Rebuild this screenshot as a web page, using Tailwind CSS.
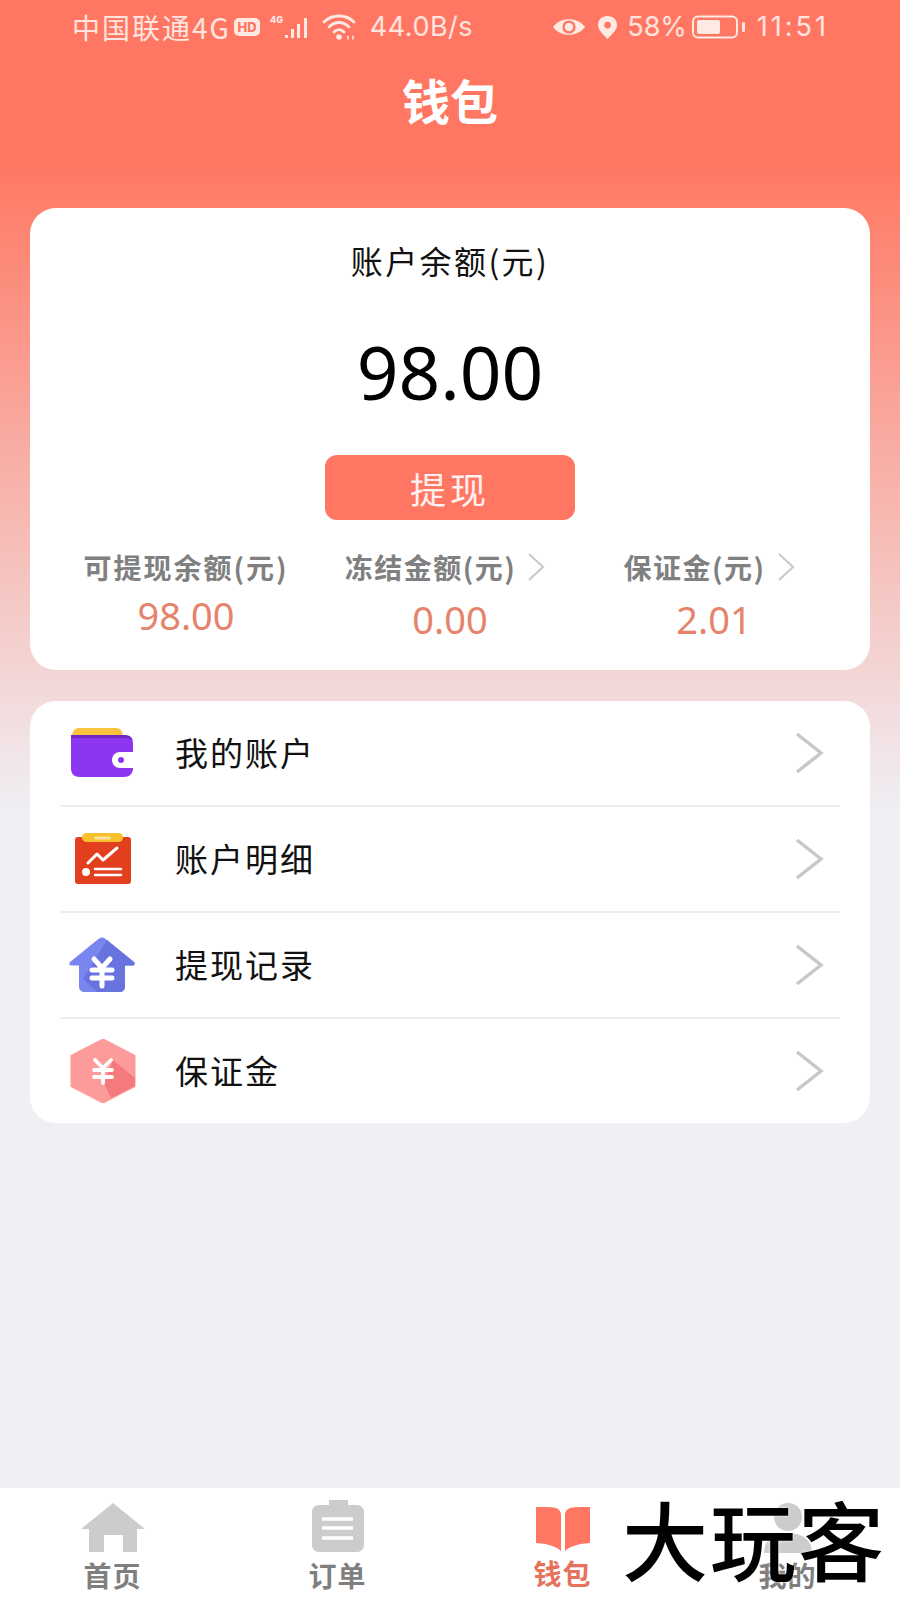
<!DOCTYPE html>
<html lang="zh">
<head>
<meta charset="utf-8">
<script src="https://cdn.jsdelivr.net/npm/@tailwindcss/browser@4"></script>
</head>
<body class="m-0">
<div class="relative w-[900px] h-[1600px] overflow-hidden flex flex-col font-['Noto_Sans_CJK_SC','Noto_Sans',sans-serif] bg-[linear-gradient(180deg,#ff7762_0px,#ff7762_160px,#f0eff4_810px,#f0eff4_1600px)]">

  <!-- status bar -->
  <div class="h-[54px] flex items-center justify-between pl-[72px] pr-[71px] text-white/80 text-[27px] font-['Inter','Noto_Sans_CJK_SC',sans-serif] shrink-0">
    <div class="flex items-center">
      <span class="font-['Noto_Sans_CJK_SC',sans-serif] text-[28px] tracking-[2px] whitespace-nowrap">中国联通4G</span>
      <svg width="28" height="22" viewBox="0 0 28 22" class="ml-[2px]"><rect x="1" y="2" width="26" height="18" rx="5" fill="#ffe9e3"/><text x="14" y="16" text-anchor="middle" font-size="13" font-weight="800" font-family="Inter" fill="#ff7762">HD</text></svg>
      <svg width="46" height="30" viewBox="0 0 46 30" class="ml-[9px]"><text x="0" y="11" font-size="9" font-weight="800" font-family="Inter" fill="#ffe9e3">4G</text><rect x="15" y="23" width="3" height="3" fill="#ffe9e3"/><rect x="21" y="17" width="3" height="9" fill="#ffe9e3"/><rect x="27" y="12" width="3" height="14" fill="#ffe9e3"/><rect x="34" y="6" width="3" height="20" fill="#ffe9e3"/></svg>
      <svg width="36" height="30" viewBox="0 0 36 30" class="ml-[6px]" fill="none" stroke="#ffe9e3" stroke-width="2.800" stroke-linecap="round"><path d="M2 10C10 2 24 2 32 10"/><path d="M7 15C13 9 21 9 27 15"/><path d="M12 20C15 17 19 17 22 20"/><circle cx="17" cy="25" r="2.800" fill="#ffe9e3" stroke="none"/><path d="M26 24v3M31 24v3" stroke-width="1.500"/></svg>
      <span class="ml-[12px] tracking-[0.5px] whitespace-nowrap">44.0B/s</span>
    </div>
    <div class="flex items-center">
      <svg width="34" height="24" viewBox="0 0 36 24"><path d="M1 12C9 1 27 1 35 12C27 23 9 23 1 12Z" fill="#ffe9e3"/><circle cx="18" cy="12" r="7" fill="#ff7762"/><circle cx="18" cy="12" r="4.500" fill="#ffe9e3"/></svg>
      <svg width="21" height="25" viewBox="0 0 22 26" class="ml-[11px]"><path d="M11 1C5 1 1 5 1 10.500C1 16 8 22 11 25C14 22 21 16 21 10.500C21 5 17 1 11 1Z" fill="#ffe9e3"/><circle cx="11" cy="10.500" r="3.500" fill="#ff7762"/></svg>
      <span class="ml-[9px]">58%</span>
      <svg width="54" height="24" viewBox="0 0 54 24" class="ml-[5px]"><rect x="1" y="1.500" width="44" height="21" rx="5" fill="none" stroke="#ffe9e3" stroke-width="2"/><rect x="5" y="5" width="23" height="14" rx="2" fill="#ffe9e3"/><rect x="50" y="7" width="3" height="10" rx="1.500" fill="#ffe9e3"/></svg>
      <span class="ml-[11px] tracking-[3px]">11:51</span>
    </div>
  </div>

  <!-- title -->
  <div class="h-[94px] flex items-center justify-center text-white text-[48px] font-bold leading-none pb-[5px] shrink-0">钱包</div>

  <!-- balance card -->
  <div class="mx-[30px] mt-[60px] h-[462px] bg-white rounded-[26px] flex flex-col items-center shrink-0">
    <div class="mt-[30px] text-[32px] leading-[44px] tracking-[2.4px] text-[#111]">账户余额(元)</div>
    <div class="mt-[45px] text-[73px] leading-[90px] text-black font-['Noto_Sans',sans-serif]">98.00</div>
    <div class="mt-[38px] w-[250px] h-[65px] rounded-[12px] bg-[#ff7762] text-white/90 text-[36px] tracking-[4px] flex items-center justify-center">提现</div>
    <div class="w-full grid grid-cols-3 mt-[29px] px-[24px]">
      <div class="flex flex-col items-center">
        <div class="text-[28px] leading-[36px] tracking-[2px] font-semibold text-[#808080] whitespace-nowrap">可提现余额(元)</div>
        <div class="text-[38px] leading-[46px] mt-[7px] text-[#e5836b] font-['Noto_Sans',sans-serif]">98.00</div>
      </div>
      <div class="flex flex-col items-center">
        <div class="flex items-center pr-[10px] text-[28px] leading-[36px] tracking-[1.5px] font-semibold text-[#808080] whitespace-nowrap">冻结金额(元)
          <svg width="18" height="28" viewBox="0 0 18 28" class="ml-[11px]" fill="none" stroke="#c8c8c8" stroke-width="2"><path d="M2 1L16 14L2 27"/></svg>
        </div>
        <div class="text-[38px] leading-[46px] mt-[11px] text-[#e5836b] font-['Noto_Sans',sans-serif]">0.00</div>
      </div>
      <div class="flex flex-col items-center">
        <div class="flex items-center pr-[10px] text-[28px] leading-[36px] tracking-[1.5px] font-semibold text-[#808080] whitespace-nowrap">保证金(元)
          <svg width="18" height="28" viewBox="0 0 18 28" class="ml-[11px]" fill="none" stroke="#c8c8c8" stroke-width="2"><path d="M2 1L16 14L2 27"/></svg>
        </div>
        <div class="text-[38px] leading-[46px] mt-[11px] text-[#e5836b] font-['Noto_Sans',sans-serif]">2.01</div>
      </div>
    </div>
  </div>

  <!-- menu card -->
  <div class="mx-[30px] mt-[31px] bg-white rounded-[26px] px-[30px] shrink-0 text-[33px] leading-[44px] tracking-[2px] text-[#111]">
    <div class="h-[106px] flex items-center border-b-2 border-[#eeeeee]">
      <svg width="66" height="52" viewBox="0 0 66 52" class="ml-[10px] shrink-0">
        <path d="M2 10C2 4 5 1 9 1H46C50 1 53 4 53 10V14H2Z" fill="#fac23f"/>
        <path d="M1 9H55C60 9 63 12 63 17V41C63 47 59 50 54 50H10C4 50 1 47 1 41Z" fill="#8d36f2"/>
        <path d="M1 8H55C59 8 62 10 63 14C60 11 58 11 55 11H1Z" fill="#6e28c0"/>
        <path d="M50 25H63V41H50C45 41 42 37 42 33C42 29 45 25 50 25Z" fill="#fff"/>
        <circle cx="51" cy="33" r="3" fill="#8d36f2"/>
      </svg>
      <span class="ml-[39px] pb-[2px]">我的账户</span>
      <svg width="30" height="42" viewBox="0 0 30 42" class="ml-auto mr-[15px]" fill="none" stroke="#c8c8c8" stroke-width="3.500"><path d="M2 2L26 21L2 40"/></svg>
    </div>
    <div class="h-[106px] flex items-center border-b-2 border-[#eeeeee]">
      <svg width="66" height="52" viewBox="0 0 66 52" class="ml-[10px] shrink-0">
        <rect x="5" y="4" width="56" height="47" rx="3" fill="#e23f1e"/>
        <rect x="12" y="0" width="41" height="9" rx="4.500" fill="#f9c02e"/>
        <rect x="24" y="3.500" width="17" height="3" rx="1.500" fill="#fbe49a"/>
        <path d="M18 30L27 21L33 27L47 15" fill="none" stroke="#fff" stroke-width="3" stroke-linecap="round" stroke-linejoin="round"/>
        <circle cx="16" cy="39" r="4" fill="#fff"/>
        <path d="M25 36H51M25 42H51" stroke="#fff" stroke-width="2.500" stroke-linecap="round"/>
      </svg>
      <span class="ml-[39px] pb-[2px]">账户明细</span>
      <svg width="30" height="42" viewBox="0 0 30 42" class="ml-auto mr-[15px]" fill="none" stroke="#c8c8c8" stroke-width="3.500"><path d="M2 2L26 21L2 40"/></svg>
    </div>
    <div class="h-[106px] flex items-center border-b-2 border-[#eeeeee]">
      <svg width="66" height="56" viewBox="0 0 66 56" class="ml-[9px] shrink-0">
        <path d="M30 1.500C32 0 34 0 36 1.500L65 25C66.500 27 65.500 28.500 63 28.500H56V49C56 53 54 55 50 55H16C12 55 10 53 10 49V28.500H3C0.500 28.500 -0.500 27 1 25Z" fill="#7a86ef"/>
        <path d="M38 3L65 25C66.500 27 65.500 28.500 63 28.500H56V49C56 53 54 55 50 55H28L14 42Z" fill="#6873e0"/>
        <path d="M25 22L33 31L41 22M23 33H43M23 41H43M33 31V49" fill="none" stroke="#fff" stroke-width="5" stroke-linecap="round"/>
      </svg>
      <span class="ml-[40px] pb-[2px]">提现记录</span>
      <svg width="30" height="42" viewBox="0 0 30 42" class="ml-auto mr-[15px]" fill="none" stroke="#c8c8c8" stroke-width="3.500"><path d="M2 2L26 21L2 40"/></svg>
    </div>
    <div class="h-[104px] flex items-center">
      <svg width="66" height="64" viewBox="0 0 66 64" class="ml-[10px] shrink-0">
        <path d="M33 1L64 17V47L33 63L2 47V17Z" fill="#fd9a9a" stroke="#fd9a9a" stroke-width="3" stroke-linejoin="round"/>
        <path d="M43 21L65 39V47L41 59L34 44Z" fill="#f47a7e"/>
        <path d="M25 21L33 29L41 21M24 31H42M24 38H42M33 29V44" fill="none" stroke="#fff" stroke-width="3.800" stroke-linecap="round"/>
      </svg>
      <span class="ml-[39px] pb-[2px]">保证金</span>
      <svg width="30" height="42" viewBox="0 0 30 42" class="ml-auto mr-[15px]" fill="none" stroke="#c8c8c8" stroke-width="3.500"><path d="M2 2L26 21L2 40"/></svg>
    </div>
  </div>

  <!-- tab bar -->
  <div class="absolute left-0 right-0 bottom-0 h-[113px] bg-white border-t border-[#f0f0f2] grid grid-cols-4 text-[28px] tracking-[1px] font-semibold text-[#7f7f7f]">
    <div class="flex flex-col items-center pt-[15px]">
      <svg width="66" height="50" viewBox="0 0 66 50"><path d="M33 0L65 26H57V49H43V32H24V49H9V26H1Z" fill="#cccccc"/></svg>
      <span class="leading-[36px] mt-[4px]">首页</span>
    </div>
    <div class="flex flex-col items-center pt-[12px]">
      <svg width="52" height="53" viewBox="0 0 52 53"><path d="M7 5H17V0H36V5H45C49 5 52 8 52 12V45C52 49 49 52 45 52H7C3 52 0 49 0 45V12C0 8 3 5 7 5Z" fill="#cccccc"/><path d="M10 19H41M10 28H41M10 38H41" stroke="#fff" stroke-width="3.500"/></svg>
      <span class="leading-[36px] mt-[4px]">订单</span>
    </div>
    <div class="flex flex-col items-center pt-[19px] text-[#e5735c]">
      <svg width="54" height="44" viewBox="0 0 54 44"><path d="M0 0C10 0 18 0 20 1C24 3 25 5 25 9V44C21 40 14 37 0 36Z" fill="#ff7762"/><path d="M54 0C44 0 36 0 34 1C30 3 29 5 29 9V44C33 40 40 37 54 36Z" fill="#ff7762"/></svg>
      <span class="leading-[36px] mt-[4px]">钱包</span>
    </div>
    <div class="flex flex-col items-center pt-[15px]">
      <svg width="54" height="50" viewBox="0 0 54 50"><circle cx="27" cy="14" r="14" fill="#cccccc"/><path d="M3 50C3 36 14 30 27 30C40 30 51 36 51 50Z" fill="#cccccc"/></svg>
      <span class="leading-[36px] mt-[4px]">我的</span>
    </div>
  </div>

  <!-- watermark -->
  <div class="absolute left-[622px] top-[1486px] text-[86px] leading-[104px] tracking-[2px] font-medium text-black whitespace-nowrap font-['Noto_Sans_CJK_SC',sans-serif] [text-shadow:0_0_3px_#fff]">大玩客</div>
</div>
</body>
</html>
